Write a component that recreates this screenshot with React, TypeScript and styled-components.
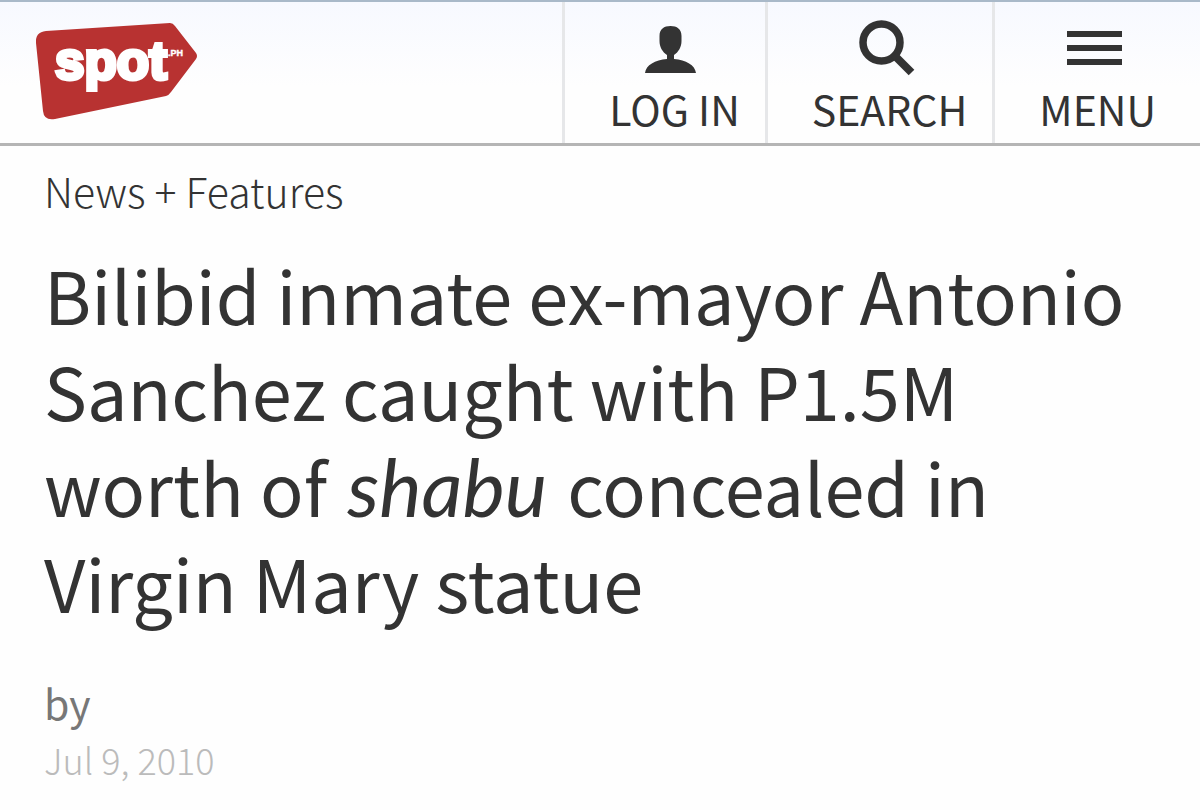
import React from "react";
import styled, { createGlobalStyle } from "styled-components";

const GlobalStyle = createGlobalStyle`
  *, *::before, *::after { box-sizing: border-box; }
  body {
    margin: 0;
    background: #fefefe;
    color: #333333;
    font-family: "Noto Sans CJK SC", "Noto Sans", sans-serif;
  }
`;

const Header = styled.header`
  display: flex;
  align-items: stretch;
  height: 146px;
  border-top: 2px solid #a9b9c9;
  border-bottom: 3px solid #b5b5b5;
  background: linear-gradient(#f7f9ff, #fefefe 60%);
`;

const Brand = styled.div`
  flex: 1;
  padding: 20px 0 0 34px;
`;

const LogoLink = styled.a`
  display: inline-block;
  svg { display: block; }
`;

const Nav = styled.nav`
  display: flex;
`;

const NavButton = styled.button<{ $end: number }>`
  display: flex;
  flex-direction: column;
  align-items: center;
  justify-content: space-between;
  padding: 16px ${(p) => p.$end}px 5px 44px;
  border: 0;
  border-left: 3px solid #e6e7e9;
  background: transparent;
  color: inherit;
  font: 400 41px/60px "Noto Sans CJK SC", "Noto Sans", sans-serif;
  white-space: nowrap;
  cursor: pointer;
  svg { display: block; margin-right: 6px; }
`;

const Article = styled.main`
  padding: 12px 44px;
`;

const Category = styled.a`
  display: block;
  color: #333333;
  font-size: 41px;
  font-weight: 300;
  line-height: 64px;
  text-decoration: none;
`;

const Title = styled.h1`
  margin: 24px 0 0;
  font-size: 72px;
  font-weight: 400;
  line-height: 96px;
`;

const Term = styled.em`
  margin: 0 4px;
  font-family: Lato, sans-serif;
  font-size: 80px;
  font-style: italic;
  line-height: 1;
`;

const Byline = styled.p`
  margin: 40px 0 0;
  color: #777777;
  font-size: 41px;
  line-height: 64px;
`;

const PublishDate = styled.time`
  display: block;
  color: #bbbbbb;
  font-size: 36px;
  font-weight: 300;
  line-height: 50px;
`;

const Logo = () => (
  <svg width="166" height="100" viewBox="34 22 166 100" role="img" aria-label="spot.ph">
    <path
      d="M46 31 L170 23 Q173 23 175 26 L196 53 Q198 56 196 59 L171 92 Q169 95 166 96 L55 119 Q44 121 43 111 L36 43 Q35 32 46 31Z"
      fill="#b83231"
    />
    <text x="55" y="79" fill="#fff" stroke="#fff" strokeWidth="4" fontFamily="Liberation Sans, sans-serif" fontWeight="700" fontSize="53">
      spot
    </text>
    <text x="168" y="56" fill="#fff" stroke="#fff" strokeWidth="0.4" fontFamily="Liberation Sans, sans-serif" fontWeight="700" fontSize="9">
      .PH
    </text>
  </svg>
);

const UserIcon = () => (
  <svg width="52" height="58" viewBox="646 18 52 58" aria-hidden="true">
    <path
      d="M671.500 26 C678 26 682.500 29 682.500 36 V41 C682.500 47 679.500 52 675 55 V59 C687 60 696 65 697 73 H646 C647 65 656 60 668 59 V55 C663.500 52 660.500 47 660.500 41 V36 C660.500 29 665 26 671.500 26Z"
      fill="#333"
    />
  </svg>
);

const SearchIcon = () => (
  <svg width="58" height="58" viewBox="857 18 58 58" fill="none" stroke="#333" aria-hidden="true">
    <circle cx="880.500" cy="42.500" r="18.500" strokeWidth="7.500" />
    <path d="M893 55 L910.500 72.500" strokeWidth="8" />
  </svg>
);

const MenuIcon = () => (
  <svg width="56" height="58" viewBox="1066 18 56 58" fill="#333" aria-hidden="true">
    <path d="M1066 31h55v6h-55zM1066 45h55v6h-55zM1066 59h55v6h-55z" />
  </svg>
);

export default function App() {
  return (
    <>
      <GlobalStyle />
      <Header>
        <Brand>
          <LogoLink href="#">
            <Logo />
          </LogoLink>
        </Brand>
        <Nav aria-label="Main">
          <NavButton type="button" $end={25}>
            <UserIcon />
            LOG IN
          </NavButton>
          <NavButton type="button" $end={25}>
            <SearchIcon />
            SEARCH
          </NavButton>
          <NavButton type="button" $end={44}>
            <MenuIcon />
            MENU
          </NavButton>
        </Nav>
      </Header>
      <Article>
        <Category href="#">News + Features</Category>
        <Title>
          Bilibid inmate ex-mayor Antonio Sanchez caught with P1.5M worth of <Term>shabu</Term> concealed in Virgin
          Mary statue
        </Title>
        <Byline>by</Byline>
        <PublishDate dateTime="2010-07-09">Jul 9, 2010</PublishDate>
      </Article>
    </>
  );
}
